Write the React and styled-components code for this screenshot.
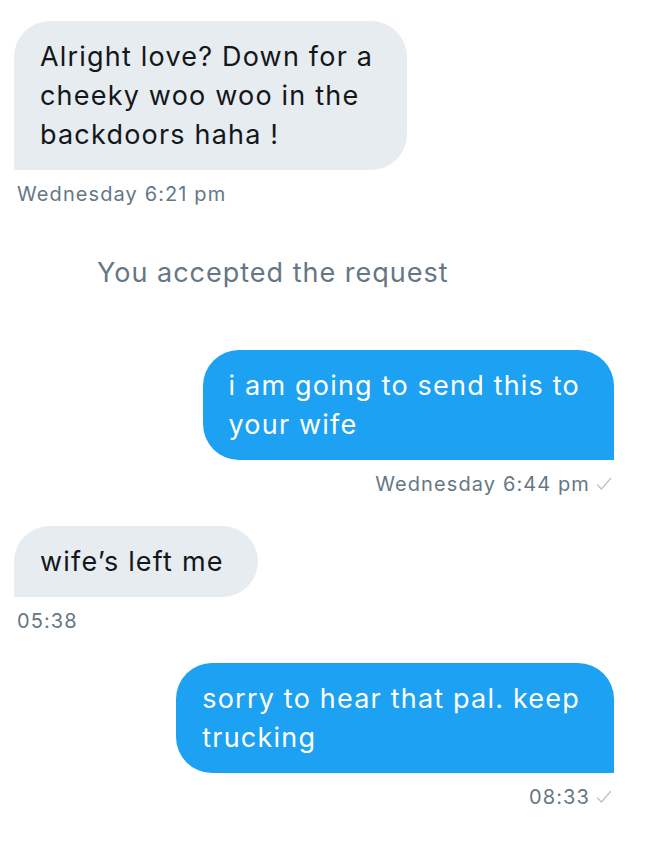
import React from "react";
import styled, { createGlobalStyle } from "styled-components";

const GlobalStyle = createGlobalStyle`
  body {
    margin: 0;
    background: #ffffff;
    font-family: Inter, "Noto Sans", sans-serif;
  }
`;

const messages = [
  { type: "in", lines: ["Alright love? Down for a", "cheeky woo woo in the", "backdoors haha !"], time: "Wednesday 6:21 pm" },
  { type: "notice", text: "You accepted the request" },
  { type: "out", lines: ["i am going to send this to", "your wife"], time: "Wednesday 6:44 pm" },
  { type: "in", lines: ["wife\u2019s left me"], time: "05:38" },
  { type: "out", lines: ["sorry to hear that pal. keep", "trucking"], time: "08:33" },
];

const Check = () => (
  <svg width="16" height="14" viewBox="0 0 16 14" fill="none">
    <path d="M1.5 8 L5.5 12 L14.5 1.5" stroke="#b5c1ca" strokeWidth="1.2" strokeLinecap="round" strokeLinejoin="round" />
  </svg>
);

const App = () => {
  return (
    <Wrapper>
      <GlobalStyle />
      {messages.map((m, i) =>
        m.type === "notice" ? (
          <Notice key={i}>{m.text}</Notice>
        ) : (
          <Group key={i} $out={m.type === "out"}>
            <Bubble $out={m.type === "out"}>
              {m.lines.map((l, j) => (
                <span key={j}>{l}</span>
              ))}
            </Bubble>
            <Meta $out={m.type === "out"}>
              {m.time}
              {m.type === "out" && <Check />}
            </Meta>
          </Group>
        )
      )}
    </Wrapper>
  );
};

const Wrapper = styled.main`
  display: flex;
  flex-direction: column;
  gap: 30px;
  padding: 21px 33px 40px 14px;
`;

const Group = styled.div`
  display: flex;
  flex-direction: column;
  align-items: ${({ $out }) => ($out ? "flex-end" : "flex-start")};
  gap: 12px;
`;

const Bubble = styled.div`
  display: flex;
  flex-direction: column;
  padding: 16px 34px 16px 26px;
  font-size: 27px;
  line-height: 39px;
  letter-spacing: 1.2px;
  border-radius: ${({ $out }) => ($out ? "36px 36px 0 36px" : "36px 36px 36px 0")};
  background: ${({ $out }) => ($out ? "#1da1f2" : "#e6ecf0")};
  color: ${({ $out }) => ($out ? "#ffffff" : "#14171a")};
  white-space: nowrap;
`;

const Meta = styled.div`
  display: flex;
  align-items: center;
  gap: 6px;
  padding: ${({ $out }) => ($out ? "0 2px 0 0" : "0 0 0 3px")};
  font-size: 20px;
  line-height: 24px;
  letter-spacing: 1.1px;
  color: #657786;
`;

const Notice = styled.div`
  padding: 17px 0 28px 83px;
  font-size: 27px;
  line-height: 39px;
  letter-spacing: 1px;
  color: #657786;
`;

export default App;
